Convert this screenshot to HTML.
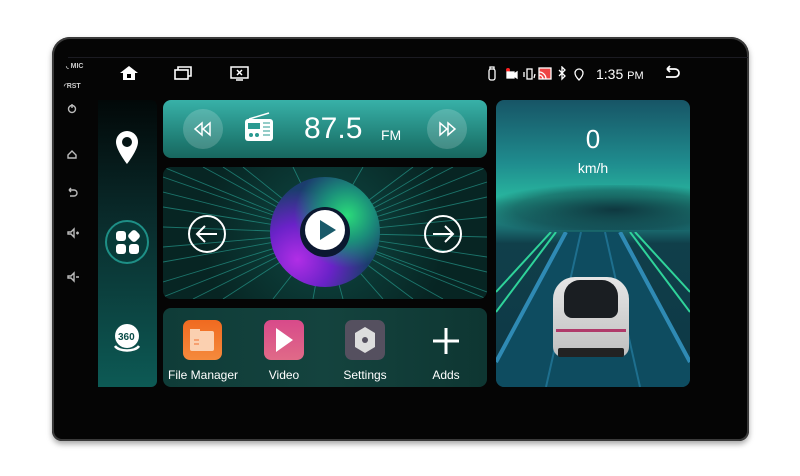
<!DOCTYPE html>
<html><head><meta charset="utf-8"><style>
*{margin:0;padding:0;box-sizing:border-box}
body{width:800px;height:476px;background:#fff;position:relative;overflow:hidden;font-family:"Liberation Sans",sans-serif;color:#fff}
.dev{position:absolute;left:52px;top:37px;width:697px;height:404px;background:#050505;border-radius:18px 18px 10px 10px;box-shadow:0 3px 6px rgba(0,0,0,.35),inset 0 0 0 2px #3a3a3a}
.abs{position:absolute}
.card{position:absolute;border-radius:8px;overflow:hidden}
.side{left:98px;top:100px;width:59px;height:287px;background:linear-gradient(#020808 0%,#0a2e2e 45%,#0d5a55 100%);border-radius:0 6px 6px 0}
.radio{left:163px;top:100px;width:324px;height:58px;background:linear-gradient(#38b1a8,#1f7d74 70%,#18675f)}
.music{left:163px;top:167px;width:324px;height:132px;background:radial-gradient(circle at 50% 50%,#0f4a45,#072523 70%)}
.apps{left:163px;top:308px;width:324px;height:79px;background:linear-gradient(90deg,#0f3c38,#14433e 50%,#0e3632)}
.car{left:496px;top:100px;width:194px;height:287px;background:linear-gradient(#175566 0%,#1f8c8e 22%,#28b59e 34%,#1a6a6e 45%,#103f4a 50%,#0d3745 100%)}
.btn{position:absolute;width:40px;height:40px;border-radius:50%;background:rgba(255,255,255,.18)}
.lbl{position:absolute;font-size:12px;text-align:center;width:80px}
.sm{font-size:7px;font-weight:bold;color:#ccc}
</style></head><body>
<div class="dev"></div>
<div class="abs" style="left:68px;top:57px;width:680px;height:1px;background:#1b1b22"></div>
<div class="abs sm" style="left:66px;top:62px">◟ MIC</div>
<div class="abs sm" style="left:64px;top:82px">◜RST</div>
<svg class="abs" style="left:62px;top:100px" width="20" height="190" fill="none" stroke="#bbb" stroke-width="1.4">
<circle cx="10" cy="9" r="3.5"/><path d="M10 4v4"/>
<path d="M6 55l4-4 4 4v3h-8z"/>
<path d="M7 90h5a3 3 0 010 6h-4M7 90l2-2M7 90l2 2"/>
<path d="M6 132h3l3-3v8l-3-3H6zM14 133h3M15.5 131.5v3"/>
<path d="M6 176h3l3-3v8l-3-3H6zM14 177h3"/>
</svg>
<svg class="abs" style="left:119px;top:65px" width="20" height="16" fill="#fff"><path d="M1 8L10 1l9 7h-3v7H4V8z"/><rect x="8" y="9" width="4" height="4" fill="#000"/></svg>
<svg class="abs" style="left:173px;top:65px" width="20" height="16" fill="none" stroke="#fff" stroke-width="1.6"><rect x="2" y="5" width="13" height="9"/><path d="M5 5V2h13v9h-3"/></svg>
<svg class="abs" style="left:230px;top:65px" width="20" height="17" fill="none" stroke="#fff" stroke-width="1.5"><rect x="1" y="2" width="17" height="11"/><path d="M7 5l5 5M12 5l-5 5M6 15h7"/></svg>
<svg class="abs" style="left:486px;top:66px" width="110" height="16" fill="none" stroke="#fff" stroke-width="1.3">
<rect x="3" y="3" width="6" height="11" rx="2"/><path d="M4 3V1h4v2"/>
<circle cx="22" cy="4" r="2" fill="#f22" stroke="none"/><rect x="21" y="6" width="7" height="6" fill="#fff"/><path d="M28 8l3-2v6l-3-2z" fill="#fff"/>
<rect x="41" y="3" width="5" height="10"/><path d="M38 6v5M49 8l-1 4"/>
<rect x="53" y="2" width="12" height="11" fill="#e44" stroke="#fff"/><path d="M53 9a4 4 0 014 4M53 6a7 7 0 017 7" stroke="#fff"/>
<path d="M73 4l6 6-3 3V1l3 3-6 6"/>
<path d="M93 14s-4-4-4-7a4 4 0 018 0c0 3-4 7-4 7z"/>
</svg>
<div class="abs" style="left:596px;top:66px;font-size:14px">1:35 <span style="font-size:11px">PM</span></div>
<svg class="abs" style="left:662px;top:65px" width="20" height="16" fill="none" stroke="#fff" stroke-width="1.8"><path d="M5 4h8a4 4 0 010 8H4M5 4l3-3M5 4l3 3"/></svg>

<div class="card side">
<svg class="abs" style="left:16px;top:30px" width="26" height="36" fill="#fff"><path d="M13 1a11 11 0 00-11 11c0 8 11 22 11 22s11-14 11-22A11 11 0 0013 1zm0 6a5 5 0 110 10 5 5 0 010-10z"/></svg>
<div class="abs" style="left:7px;top:120px;width:44px;height:44px;border-radius:50%;border:2px solid #1e8f86;background:#083a38"></div>
<svg class="abs" style="left:17px;top:130px" width="26" height="26" fill="#fff"><rect x="1" y="1" width="10" height="10" rx="3"/><rect x="14" y="1" width="10" height="10" rx="3" transform="rotate(45 19 6)"/><rect x="1" y="14" width="10" height="10" rx="3"/><rect x="14" y="14" width="10" height="10" rx="3"/></svg>
<svg class="abs" style="left:14px;top:222px" width="32" height="34"><circle cx="15" cy="14" r="12" fill="#fff"/><text x="6" y="18" font-size="10" font-weight="bold" fill="#0b4c48" font-family="Liberation Sans">360</text><path d="M3 24c4 6 20 6 24 0" stroke="#fff" stroke-width="2.5" fill="none"/></svg>
</div>

<div class="card radio">
<div class="btn" style="left:20px;top:9px"></div>
<svg class="abs" style="left:29px;top:19px" width="22" height="20" fill="none" stroke="#fff" stroke-width="1.5"><path d="M10 4L3 10l7 6zM18 4l-7 6 7 6z"/></svg>
<svg class="abs" style="left:80px;top:11px" width="32" height="34" fill="#fff"><path d="M6 8L26 2" stroke="#fff" stroke-width="1.5"/><rect x="2" y="8" width="28" height="22" rx="3"/><rect x="5" y="12" width="12" height="6" fill="#2a9a91"/><circle cx="8" cy="24" r="2" fill="#2a9a91"/><circle cx="14" cy="24" r="2" fill="#2a9a91"/><path d="M20 12h7M20 16h7M20 20h7M20 24h7" stroke="#2a9a91"/></svg>
<div class="abs" style="left:141px;top:12px;font-size:30px">87.5</div>
<div class="abs" style="left:218px;top:27px;font-size:14px">FM</div>
<div class="btn" style="left:264px;top:9px"></div>
<svg class="abs" style="left:273px;top:19px" width="22" height="20" fill="none" stroke="#fff" stroke-width="1.5"><path d="M4 4l7 6-7 6zM12 4l7 6-7 6z"/></svg>
</div>

<div class="card music">
<svg class="abs" style="left:0;top:0" width="324" height="132" stroke="#2aa89a" stroke-width="0.9" opacity=".6">
<path d="M162 66L0 10M162 66L0 40M162 66L0 80M162 66L0 115M162 66L30 132M162 66L80 0M162 66L40 0M162 66L324 15M162 66L324 50M162 66L324 90M162 66L324 125M162 66L280 132M162 66L250 0M162 66L290 0M162 66L110 132M162 66L220 132M162 66L0 60M162 66L324 70M162 66L130 0M162 66L200 0M162 66L0 25M162 66L0 95M162 66L0 130M162 66L324 30M162 66L324 105M162 66L60 0M162 66L270 0M162 66L60 132M162 66L250 132M162 66L180 132M162 66L150 132M162 66L0 0M162 66L324 0M162 66L324 132"/>
</svg>
<div class="abs" style="left:107px;top:10px;width:110px;height:110px;border-radius:50%;background:radial-gradient(circle at 70% 35%,#2bdc7a 0,#1b8f7a 25%,transparent 50%),radial-gradient(circle at 25% 75%,#b12ee6 0,#6a22c8 30%,transparent 60%),#1b3d6e"></div>
<div class="abs" style="left:137px;top:40px;width:50px;height:50px;border-radius:50%;background:#0b1830"></div>
<div class="abs" style="left:142px;top:43px;width:40px;height:40px;border-radius:50%;background:#fff"></div>
<svg class="abs" style="left:155px;top:51px" width="20" height="24"><path d="M2 2l16 10-16 10z" fill="#1a5a6a"/></svg>
<svg class="abs" style="left:24px;top:47px" width="40" height="40" fill="none" stroke="#fff" stroke-width="2"><circle cx="20" cy="20" r="18"/><path d="M30 20H11M18 12l-8 8 8 8"/></svg>
<svg class="abs" style="left:260px;top:47px" width="40" height="40" fill="none" stroke="#fff" stroke-width="2"><circle cx="20" cy="20" r="18"/><path d="M10 20h19M22 12l8 8-8 8"/></svg>
</div>

<div class="card apps">
<div class="abs" style="left:20px;top:12px;width:39px;height:40px;border-radius:7px;background:linear-gradient(#f06a20,#f58a3c)"></div>
<svg class="abs" style="left:26px;top:20px" width="28" height="26"><rect x="1" y="3" width="24" height="20" fill="#fbd0b0" rx="2"/><rect x="1" y="1" width="10" height="4" fill="#fbd0b0"/><path d="M5 12h5M5 16h5" stroke="#f07030"/></svg>
<div class="abs" style="left:101px;top:12px;width:40px;height:40px;border-radius:7px;background:linear-gradient(#d84a8a,#e06a88)"></div>
<svg class="abs" style="left:112px;top:19px" width="20" height="26"><path d="M1 1l17 12L1 25z" fill="#fff"/></svg>
<div class="abs" style="left:182px;top:12px;width:40px;height:40px;border-radius:7px;background:#55505f"></div>
<svg class="abs" style="left:190px;top:18px" width="24" height="28"><path d="M12 1l10 6v14l-10 6-10-6V7z" fill="#ddd"/><circle cx="12" cy="14" r="3" fill="#55505f"/></svg>
<svg class="abs" style="left:268px;top:18px" width="30" height="30" stroke="#fff" stroke-width="3"><path d="M15 2v26M2 15h26"/></svg>
<div class="lbl" style="left:0;top:60px;width:80px">File Manager</div>
<div class="lbl" style="left:81px;top:60px">Video</div>
<div class="lbl" style="left:162px;top:60px">Settings</div>
<div class="lbl" style="left:243px;top:60px">Adds</div>
</div>

<div class="card car">
<div class="abs" style="left:-10px;top:85px;width:214px;height:45px;background:radial-gradient(ellipse at 60% 55%,rgba(12,45,55,.9),rgba(12,45,55,.4) 55%,transparent 75%)"></div>
<div class="abs" style="left:0;top:24px;width:194px;text-align:center;font-size:26px">0</div>
<div class="abs" style="left:0;top:60px;width:194px;text-align:center;font-size:14px">km/h</div>
<svg class="abs" style="left:0;top:132px" width="194" height="155">
<path d="M70 0h54l70 130v25H0v-25z" fill="#0e4c60"/>
<path d="M55 0L0 60M60 0L0 80" stroke="#2fd39a" stroke-width="2"/>
<path d="M139 0L194 60M134 0L194 80" stroke="#2fd39a" stroke-width="2"/>
<path d="M70 0L0 130M124 0L194 130" stroke="#2f8ab4" stroke-width="4"/>
<path d="M85 0L50 155M109 0L144 155" stroke="#1e6f8e" stroke-width="2"/>
</svg>
<div class="abs" style="left:57px;top:177px;width:76px;height:80px;border-radius:22px 22px 10px 10px;background:linear-gradient(#e6e6e6,#bfbfbf)"></div>
<div class="abs" style="left:68px;top:180px;width:54px;height:38px;border-radius:16px 16px 8px 8px;background:#1a1e22"></div>
<div class="abs" style="left:60px;top:229px;width:70px;height:3px;background:#b03a6a"></div>
<div class="abs" style="left:62px;top:248px;width:66px;height:9px;background:#222;border-radius:2px"></div>
</div>
</body></html>
